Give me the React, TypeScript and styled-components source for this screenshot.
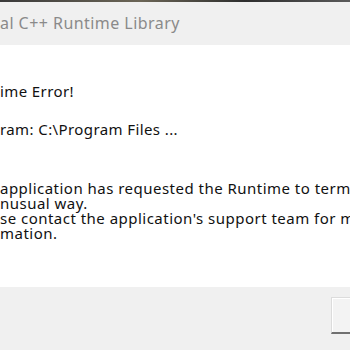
import styled, { createGlobalStyle } from 'styled-components';

const GlobalStyle = createGlobalStyle`
  html, body {
    margin: 0;
    padding: 0;
    background: #f0f0f0;
  }
`;

const Screen = styled.div`
  width: 350px;
  height: 350px;
  overflow: hidden;
  display: flex;
  flex-direction: column;
  font-family: 'Noto Sans', 'Open Sans', sans-serif;
`;

const Backdrop = styled.div`
  height: 2px;
  background: linear-gradient(90deg, #3a3a3a, #6b6556 40%, #2e2e2e 70%, #5a5a5a);
`;

const TitleBar = styled.div`
  height: 43px;
  background: #f0f0f0;
  padding-top: 11px;
  box-sizing: border-box;
`;

const Title = styled.div`
  font-size: 16px;
  line-height: 20px;
  letter-spacing: 0.45px;
  color: #8a8a8a;
  white-space: nowrap;
`;

const Body = styled.div`
  height: 242px;
  background: #ffffff;
  display: flex;
  flex-direction: column;
  padding-top: 36px;
  box-sizing: border-box;
  letter-spacing: 0.4px;
`;

const Heading = styled.div<{ $gap?: number }>`
  font-size: 15px;
  line-height: 20px;
  color: #111;
  white-space: nowrap;
  margin-top: ${(p) => p.$gap ?? 0}px;
`;

const Message = styled.div`
  margin-top: 42px;
  font-size: 15px;
  line-height: 15px;
  letter-spacing: 0.48px;
  color: #111;
`;

const Line = styled.div`
  white-space: nowrap;
`;

const Footer = styled.div`
  flex: 1;
  background: #f0f0f0;
  display: flex;
  justify-content: flex-end;
  padding-top: 10px;
  box-sizing: border-box;
`;

const Button = styled.div`
  width: 19px;
  height: 37px;
  box-sizing: border-box;
  border: 1px solid #dcdcdc;
  border-right: none;
  border-bottom: 2px solid #707070;
  background: #f3f3f3;
  box-shadow: inset 1px 1px 0 #ffffff;
`;

export default function App() {
  return (
    <>
      <GlobalStyle />
      <Screen>
        <Backdrop />
        <TitleBar>
          <Title>al C++ Runtime Library</Title>
        </TitleBar>
        <Body>
          <Heading>ime Error!</Heading>
          <Heading $gap={18}>ram: C:\Program Files ...</Heading>
          <Message>
            <Line>application has requested the Runtime to term</Line>
            <Line>nusual way.</Line>
            <Line>se contact the application's support team for m</Line>
            <Line>mation.</Line>
          </Message>
        </Body>
        <Footer>
          <Button />
        </Footer>
      </Screen>
    </>
  );
}
